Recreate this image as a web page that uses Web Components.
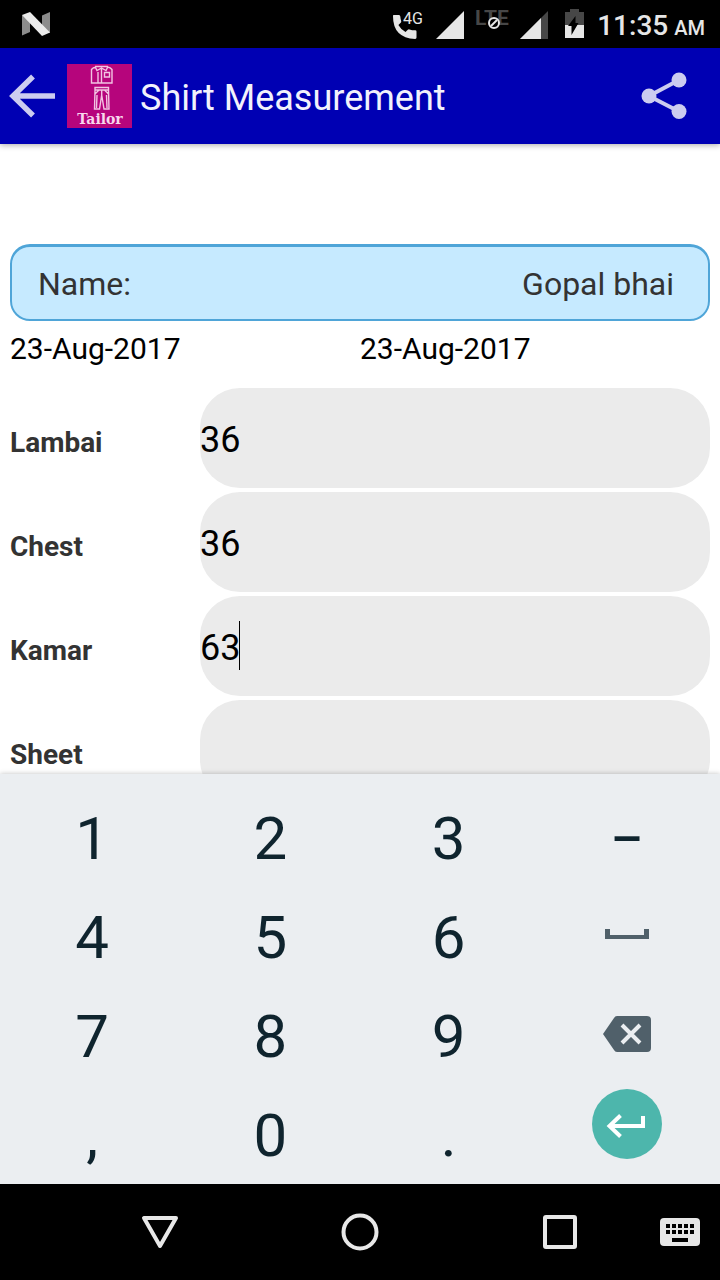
<!DOCTYPE html>
<html lang="en">
<head>
<meta charset="utf-8">
<meta name="viewport" content="width=device-width, initial-scale=1">
<title>Shirt Measurement</title>
<style>
html, body { height: 100%; margin: 0; }
body { font-family: Roboto, "Noto Sans", sans-serif; background: #fff; color: #000; overflow: hidden; }
</style>
</head>
<body>
<tailor-screen></tailor-screen>

<template id="tpl-screen">
<style>
:host { display: flex; flex-direction: column; height: 100vh; background: #fdfdfd; }
app-bar { z-index: 1; }
main { flex: 1; min-height: 0; overflow: hidden; padding: 100px 10px 0; background: #fff; }
.dates { display: grid; grid-template-columns: 1fr 1fr; padding: 10px 0 21px; font-size: 30px; line-height: 36px; }
.fields { display: grid; gap: 4px; }
</style>
<status-bar></status-bar>
<app-bar>Shirt Measurement</app-bar>
<main>
  <name-card><span slot="label">Name:</span>Gopal bhai</name-card>
  <div class="dates"><time datetime="2017-08-23">23-Aug-2017</time><time datetime="2017-08-23">23-Aug-2017</time></div>
  <div class="fields">
    <measure-field label="Lambai" value="36"></measure-field>
    <measure-field label="Chest" value="36"></measure-field>
    <measure-field label="Kamar" value="63" active></measure-field>
    <measure-field label="Sheet" value=""></measure-field>
  </div>
</main>
<number-pad></number-pad>
<nav-bar></nav-bar>
</template>

<template id="tpl-status">
<style>
:host { display: flex; align-items: center; height: 48px; padding: 0 15px 0 20px; background: #000; color: #e6e6e6; font-weight: 500; }
svg { display: block; flex: none; }
.n { margin-right: auto; }
.time { display: flex; align-items: baseline; gap: 6px; margin-left: 13px; font-size: 28px; line-height: 44px; padding-top: 6px; }
.time small { font-size: 20px; }
text { font-family: Roboto, sans-serif; }
</style>
<svg class="n" width="32" height="48" viewBox="20 0 32 48" aria-hidden="true">
  <path fill="#8c8c8c" d="M22 15l8 5v12l-8 3.500zM42 15.500l8-3.500v21l-8-5z"/>
  <path fill="#ebebeb" d="M22 15l8-3 20 20.500-8 3.500z"/>
</svg>
<svg width="193" height="48" viewBox="391 0 193 48" role="img" aria-label="Signal and battery">
  <path fill="#e6e6e6" d="M393.500 15h5.500q1.200 0 1.300 1.500.2 2.500.9 4.500.2 1-.5 1.700l-2.300 2.300q2.500 4.500 7.100 7.100l2.300-2.300q.7-.7 1.700-.4 2.500.9 5.700.9 1.300 0 1.300 1.300v6q0 1.400-1.300 1.400-22.200-1-22.200-22.700 0-1.300.5-1.300z"/>
  <text x="403" y="24" font-size="16" font-weight="400" fill="#e6e6e6">4G</text>
  <path fill="#e6e6e6" d="M464 11v28h-28z"/>
  <text x="475" y="25" font-size="21" font-weight="700" fill="#474747">LTE</text>
  <circle cx="494" cy="23" r="5" fill="#000" stroke="#e6e6e6" stroke-width="2"/>
  <path stroke="#e6e6e6" stroke-width="2" d="M491 26l6-6"/>
  <path fill="#474747" d="M548 11v28h-28z"/>
  <path fill="#e6e6e6" d="M541 18v21h-21z"/>
  <path fill="#474747" d="M565 12h5V9h9v3h5v13h-19z"/>
  <path fill="#e6e6e6" d="M565 25h19v13h-19z"/>
  <path fill="#000" d="M575.500 16v7h3l-7 12v-9h-3.500z"/>
</svg>
<div class="time"><span>11:35</span><small>AM</small></div>
</template>

<template id="tpl-appbar">
<style>
:host { display: flex; align-items: center; height: 96px; padding-right: 24px; background: #0000b3; color: #f2f2fc; box-shadow: 0 1px 6px rgba(0,0,0,.35); }
button { display: block; flex: none; margin: 0; padding: 0; border: 0; background: none; }
svg { display: block; flex: none; }
h1 { flex: 1; margin: 0 0 0 8px; font-size: 36px; line-height: 48px; font-weight: 400; padding-top: 4px; }
</style>
<button aria-label="Back"><svg width="67" height="48" viewBox="0 72 67 48"><path fill="none" stroke="#ccccf0" stroke-width="5.500" d="M55 96H14M33 76.500L13 96l20 19.500"/></svg></button>
<svg width="65" height="64" viewBox="0 0 65 64" role="img" aria-label="Tailor">
  <path fill="#b6057c" d="M0 0h65v64H0z"/>
  <g fill="none" stroke="#f2c4e2" stroke-width="1.400">
    <path d="M29 3q-3 .5-4.500 2.500V19H45V5.500Q43.500 3.500 40.500 3M28 2.500h13M28 2.500l2 4 4.500-2.500 4.500 2.500 2-4M34.500 4v15M31 8v11M37.500 8.500h5V13h-5z"/>
    <path d="M28 23.500h13.500v2.500H28zM28 26l-.5 19h5l2.200-14 2.300 14h5L41.500 26M28 30l4-4M41.500 30l-4-4M34.700 26v6M30 31l-.5 13M39.500 31l.5 13"/>
  </g>
  <text x="33" y="60" text-anchor="middle" font-family="'DejaVu Serif', serif" font-weight="700" font-size="14" fill="#f8d7ec">Tailor</text>
</svg>
<h1><slot></slot></h1>
<button aria-label="Share"><svg width="56" height="56" viewBox="640 68 56 56"><path fill="none" stroke="#ccccf0" stroke-width="4" d="M679 80l-30 16 30 15.500"/><g fill="#ccccf0"><circle cx="679" cy="80" r="7.500"/><circle cx="649" cy="96" r="7.500"/><circle cx="679" cy="111.500" r="7.500"/></g></svg></button>
</template>

<template id="tpl-name">
<style>
:host { display: flex; justify-content: space-between; align-items: center; box-sizing: border-box; height: 77px; padding: 2px 34px 0 26px; border: 2px solid #4fa5d8; border-top-width: 3px; border-radius: 20px; background: #c6eaff; color: #333; font-size: 32px; line-height: 40px; }
</style>
<slot name="label"></slot><span><slot></slot></span>
</template>

<template id="tpl-field">
<style>
:host { display: grid; grid-template-columns: 190px 1fr; align-items: center; }
label { padding-top: 10px; font-size: 28px; line-height: 36px; font-weight: 700; color: #333; }
.box { position: relative; font-size: 36px; }
input { display: block; box-sizing: border-box; width: 100%; height: 100px; margin: 0; padding: 4px 0 0; border: 0; border-radius: 40px; outline: 0; background: #ebebeb; font: inherit; color: #000; }
.caret { display: none; position: absolute; left: calc(2ch - 1px); top: 25px; width: 1px; height: 49px; background: #000; }
:host([active]) .caret { display: block; }
:host([active]) input { caret-color: transparent; }
</style>
<label for="value"></label>
<div class="box"><input id="value" type="text" inputmode="decimal"><span class="caret"></span></div>
</template>

<template id="tpl-pad">
<style>
:host { display: grid; grid-template-columns: repeat(4, 1fr); grid-auto-rows: 99px; padding: 14px 4px 0 3px; background: #ebeef1; box-shadow: 0 0 5px rgba(0,0,0,.25); z-index: 1; }
button { display: flex; align-items: center; justify-content: center; margin: 0; padding: 2px 0 0; border: 0; background: none; font: inherit; font-size: 60px; line-height: 72px; color: #0f242e; }
button.dash { font-size: 50px; font-weight: 500; }
button.icon { padding: 0; }
button.top { align-items: flex-start; padding-top: 4px; }
svg { display: block; }
</style>
<button>1</button><button>2</button><button>3</button><button class="dash">–</button>
<button>4</button><button>5</button><button>6</button>
<button class="icon" aria-label="Space"><svg width="44" height="16" viewBox="0 0 44 16"><path fill="#50606a" d="M0 0h5v6h34V0h5v10H0z"/></svg></button>
<button>7</button><button>8</button><button>9</button>
<button class="icon" aria-label="Delete"><svg width="48" height="40" viewBox="0 0 48 40"><path fill="#50606a" d="M14 0h30q4 0 4 4v28q0 4-4 4H14q-2 0-3-2L0 18 11 2q1-2 3-2z"/><path stroke="#ebeef1" stroke-width="4" d="M19 9l18 18M37 9L19 27"/></svg></button>
<button>,</button><button>0</button><button>.</button>
<button class="icon top" aria-label="Enter"><svg width="70" height="70" viewBox="0 0 70 70"><circle cx="35" cy="35" r="35" fill="#4db6ac"/><path fill="none" stroke="#fff" stroke-width="4" d="M51 27v10H18M28.500 26.500L17.500 37l11 10.500"/></svg></button>
</template>

<template id="tpl-nav">
<style>
:host { display: grid; grid-template-columns: 1fr 1fr 1fr 40px; height: 96px; padding: 0 20px 0 60px; background: #000; }
button { display: flex; align-items: center; justify-content: center; margin: 0; padding: 0; border: 0; background: none; }
svg { display: block; flex: none; }
</style>
<button aria-label="Back"><svg width="40" height="40" viewBox="0 0 40 40"><path fill="none" stroke="#e8e8e8" stroke-width="4" stroke-linejoin="round" d="M4 6h32L20 34z"/></svg></button>
<button aria-label="Home"><svg width="40" height="40" viewBox="0 0 40 40"><circle cx="20" cy="20" r="16.500" fill="none" stroke="#e8e8e8" stroke-width="4"/></svg></button>
<button aria-label="Recent apps"><svg width="40" height="40" viewBox="0 0 40 40"><rect x="5" y="5" width="30" height="30" rx="1" fill="none" stroke="#e8e8e8" stroke-width="4"/></svg></button>
<button aria-label="Choose keyboard"><svg width="40" height="28" viewBox="0 0 40 28"><rect width="40" height="28" rx="4" fill="#e6e6e6"/><path stroke="#000" stroke-width="4" stroke-dasharray="4 2" d="M6 8h28M6 14h28"/><path fill="#000" d="M12 20h16v4H12z"/></svg></button>
</template>

<script>
class TemplateElement extends HTMLElement {
  constructor() {
    super();
    const source = document.getElementById(this.constructor.template);
    this.attachShadow({ mode: "open" }).append(document.importNode(source.content, true));
  }
}
customElements.define("status-bar", class extends TemplateElement { static template = "tpl-status"; });
customElements.define("app-bar", class extends TemplateElement { static template = "tpl-appbar"; });
customElements.define("name-card", class extends TemplateElement { static template = "tpl-name"; });
customElements.define("number-pad", class extends TemplateElement { static template = "tpl-pad"; });
customElements.define("nav-bar", class extends TemplateElement { static template = "tpl-nav"; });
customElements.define("measure-field", class extends TemplateElement {
  static template = "tpl-field";
  connectedCallback() {
    this.shadowRoot.querySelector("label").textContent = this.getAttribute("label");
    this.shadowRoot.querySelector("input").value = this.getAttribute("value") || "";
  }
});
customElements.define("tailor-screen", class extends TemplateElement { static template = "tpl-screen"; });
</script>
</body>
</html>
